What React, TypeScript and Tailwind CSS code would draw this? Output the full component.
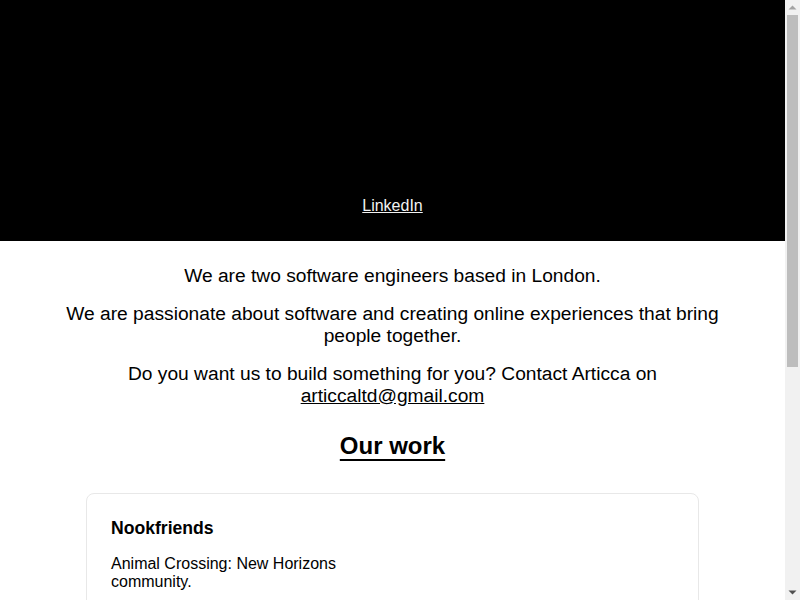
function Scrollbar() {
  return (
    <div className="w-[15px] shrink-0 bg-[#f1f1f1] flex flex-col items-center">
      <svg width="15" height="15" viewBox="0 0 15 15" className="shrink-0">
        <path d="M3.5 9.5 L7.5 5.5 L11.5 9.5 Z" fill="#a3a3a3" />
      </svg>
      <div className="w-[11px] h-[352px] bg-[#bdbdbd]" />
      <div className="flex-1" />
      <svg width="15" height="15" viewBox="0 0 15 15" className="shrink-0">
        <path d="M3.5 5.5 L11.5 5.5 L7.5 9.5 Z" fill="#505050" />
      </svg>
    </div>
  );
}

export default function App() {
  return (
    <div className="h-screen flex bg-white text-black" style={{ fontFamily: '"Liberation Sans", Arial, sans-serif' }}>
      <div className="flex-1 overflow-hidden">
        <header className="bg-black h-[241px] flex flex-col justify-end items-center pb-[26px]">
          <a href="#" className="text-[16px] leading-[18px] text-[#f2f2f2] underline">
            LinkedIn
          </a>
        </header>

        <main className="flex flex-col items-center px-4">
          <section className="max-w-[690px] mx-auto text-center text-[19.2px] leading-[22px] mt-[24px]">
            <p>We are two software engineers based in London.</p>
            <p className="mt-[16px]">
              We are passionate about software and creating online experiences that bring people together.
            </p>
            <p className="mt-[16px]">
              Do you want us to build something for you? Contact Articca on{' '}
              <a href="#" className="underline">articcaltd@gmail.com</a>
            </p>
          </section>

          <h2 className="mt-[25px] text-[24px] leading-[28px] font-bold underline underline-offset-[5px] decoration-2">
            Our work
          </h2>

          <div className="mt-[33px] w-[613px] rounded-lg border border-[#e8e8e8] p-6 h-[420px]">
            <div className="grid grid-cols-2 gap-6">
              <div>
                <h3 className="text-[17.6px] leading-[21px] font-bold">Nookfriends</h3>
                <p className="mt-[16px] text-[16px] leading-[18px]">
                  Animal Crossing: New Horizons community.
                </p>
              </div>
              <div />
            </div>
          </div>
        </main>
      </div>
      <Scrollbar />
    </div>
  );
}
